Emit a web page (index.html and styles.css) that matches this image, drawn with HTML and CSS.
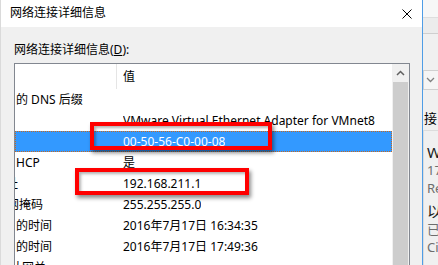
FILE: index.html
```html
<!DOCTYPE html>
<html lang="zh-CN">
<head>
    <meta charset="UTF-8">
    <title>网络连接详细信息</title>
    <link rel="stylesheet" href="styles.css">
</head>
<body>
    <div class="screen">
        <!-- Dialog -->
        <div class="dialog">
            <div class="titlebar">
                <span class="title">网络连接详细信息</span>
                <svg class="close" width="10" height="10" viewBox="0 0 10 10">
                    <path d="M0.5 0.5 L9.5 9.5 M9.5 0.5 L0.5 9.5" stroke="#000" stroke-width="1" fill="none"/>
                </svg>
            </div>
            <div class="content">
                <div class="label">网络连接详细信息(<u>D</u>):</div>
                <div class="listview">
                    <div class="list-main">
                        <div class="list-head">
                            <div class="col-key"></div>
                            <div class="col-val">值</div>
                        </div>
                        <div class="row"><div class="key">的 DNS 后缀</div><div class="val"></div></div>
                        <div class="row"><div class="key"></div><div class="val">VMware Virtual Ethernet Adapter for VMnet8</div></div>
                        <div class="row selected"><div class="key"></div><div class="val">00-50-56-C0-00-08</div></div>
                        <div class="row"><div class="key">HCP</div><div class="val">是</div></div>
                        <div class="row"><div class="key"><span class="cut cut-10">址</span></div><div class="val">192.168.211.1</div></div>
                        <div class="row"><div class="key"><span class="cut cut-9">网</span>掩码</div><div class="val">255.255.255.0</div></div>
                        <div class="row"><div class="key">的时间</div><div class="val">2016年7月17日 16:34:35</div></div>
                        <div class="row"><div class="key">的时间</div><div class="val">2016年7月17日 17:49:36</div></div>
                        <div class="row"><div class="key"><span class="cut cut-6">认</span>网关</div><div class="val"></div></div>
                    </div>
                    <div class="scrollbar">
                        <div class="sb-up">
                            <svg width="9" height="6" viewBox="0 0 9 6">
                                <path d="M1 5 L4.5 1.5 L8 5" stroke="#606060" stroke-width="1.5" fill="none"/>
                            </svg>
                        </div>
                        <div class="sb-thumb"></div>
                    </div>
                </div>
            </div>
        </div>

        <!-- Window behind, on the right -->
        <div class="side">
            <div class="side-top"></div>
            <div class="side-bar"></div>
            <div class="side-drop">
                <svg width="9" height="6" viewBox="0 0 9 6">
                    <path d="M1 1 L4.5 4.5 L8 1" stroke="#808080" stroke-width="1.3" fill="none"/>
                </svg>
            </div>
            <div class="side-tab">接</div>
            <div class="side-panel">
                <div class="sp-name">W</div>
                <div class="sp-gray">17</div>
                <div class="sp-gray">Re</div>
                <div class="sp-name sp-gap">以</div>
                <div class="sp-gray">已</div>
                <div class="sp-gray">Ci</div>
            </div>
        </div>
    </div>

    <!-- Annotation marks -->
    <div class="mark mark-mac"></div>
    <div class="mark mark-ip"></div>
</body>
</html>
```

FILE: styles.css
```css
* {
    box-sizing: border-box;
}

body {
    margin: 0;
    width: 438px;
    height: 265px;
    overflow: hidden;
    font-family: 'Noto Sans', 'Noto Sans CJK SC', sans-serif;
    font-size: 12px;
    color: #000;
    background: #f0f0f0;
}

.screen {
    display: flex;
    height: 265px;
}

/* Dialog */
.dialog {
    width: 423px;
    flex-shrink: 0;
    display: flex;
    flex-direction: column;
    background: #f0f0f0;
    border-left: 1px solid #dadada;
    border-right: 1px solid #4f9de6;
}

.titlebar {
    height: 27px;
    flex-shrink: 0;
    display: flex;
    align-items: center;
    padding: 0 10px 2px 9px;
    background: #fff;
}

.title {
    line-height: 16px;
}

.close {
    margin-left: auto;
    margin-top: 2px;
}

.content {
    flex: 1;
    padding: 15px 12px 0 13px;
}

.label {
    line-height: 16px;
    height: 16px;
    margin-bottom: 5px;
}

.listview {
    display: flex;
    height: 220px;
    background: #fff;
    border: 1px solid #828790;
}

.list-main {
    flex: 1;
    overflow: hidden;
}

.list-head {
    display: flex;
    align-items: center;
    height: 25px;
}

.list-head .col-key {
    width: 102px;
    height: 25px;
    border-right: 1px solid #e5e5e5;
}

.list-head .col-val {
    padding-left: 6px;
    line-height: 16px;
}

.row {
    display: flex;
    align-items: center;
    height: 21px;
    line-height: 16px;
    white-space: nowrap;
}

.row .key {
    width: 108px;
    flex-shrink: 0;
    padding-left: 1px;
    overflow: hidden;
}

.row .val {
    overflow: hidden;
}

.row.selected {
    background: #3399ff;
    color: #fff;
    outline: 1px dotted #c8681e;
    outline-offset: -1px;
}

.cut {
    display: inline-block;
}

.cut-10 {
    margin-left: -10px;
}

.cut-9 {
    margin-left: -9px;
}

.cut-6 {
    margin-left: -6px;
}

.scrollbar {
    width: 17px;
    flex-shrink: 0;
    display: flex;
    flex-direction: column;
    background: #f0f0f0;
}

.sb-up {
    height: 17px;
    display: flex;
    align-items: center;
    justify-content: center;
}

.sb-thumb {
    flex: 1;
    margin: 1px 1px 0;
    background: #cdcdcd;
}

/* Window behind */
.side {
    flex: 1;
    display: flex;
    flex-direction: column;
    background: #f0f0f0;
}

.side-top {
    height: 18px;
    background: #f7f7f7;
    border-bottom: 1px solid #dedede;
}

.side-bar {
    height: 16px;
    background: #ececec;
    border-bottom: 1px solid #cfcfcf;
}

.side-drop {
    height: 20px;
    margin-top: 36px;
    display: flex;
    align-items: center;
    padding-left: 2px;
    background: #f5f5f5;
    border: 1px solid #d0d0d0;
    border-right: none;
}

.side-tab {
    margin-top: 20px;
    padding-left: 1px;
    line-height: 16px;
    font-size: 13px;
    white-space: nowrap;
}

.side-panel {
    flex: 1;
    margin-top: 4px;
    padding: 12px 0 0 3px;
    border-top: 1px solid #dcdcdc;
    border-left: 1px solid #dcdcdc;
    white-space: nowrap;
}

.sp-name {
    font-size: 15px;
    line-height: 18px;
    color: #1a1a1a;
}

.sp-gray {
    font-size: 13px;
    line-height: 18px;
    color: #6d6d6d;
}

.sp-gap {
    margin-top: 5px;
}

/* Red annotation marks */
.mark {
    position: absolute;
    border: 4px solid #ff0000;
    box-shadow: 2px 3px 4px rgba(0, 0, 0, 0.45), inset 2px 2px 3px rgba(0, 0, 0, 0.3);
}

.mark-mac {
    left: 90px;
    top: 122px;
    width: 182px;
    height: 28px;
}

.mark-ip {
    left: 75px;
    top: 168px;
    width: 174px;
    height: 27px;
}
```
